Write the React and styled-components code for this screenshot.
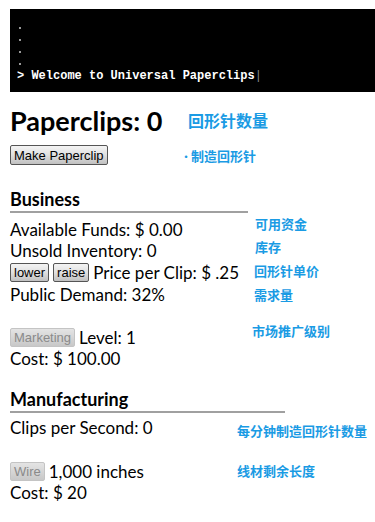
import React from 'react';
import styled, { createGlobalStyle } from 'styled-components';

const GlobalStyle = createGlobalStyle`
  body {
    margin: 0;
    background: #fff;
    font-family: Lato, "Noto Sans", sans-serif;
    color: #000;
  }
`;

const Page = styled.div`
  width: 375px;
  height: 522px;
  padding: 9px 0 0 10px;
  box-sizing: border-box;
  overflow: hidden;
`;

const Terminal = styled.div`
  background: #000;
  height: 83px;
  padding: 15px 0 0 7px;
  box-sizing: border-box;
  font-family: "Liberation Mono", "DejaVu Sans Mono", monospace;
  font-size: 12px;
  color: #fff;
`;

const Dot = styled.div`
  width: 2px;
  height: 2px;
  background: #999;
  margin: 3px 0 10px 2px;
`;

const Prompt = styled.div`
  font-weight: bold;
  line-height: 14px;
  margin-top: -6px;
`;

const Cursor = styled.span`
  color: #888;
  font-weight: normal;
`;

const Line = styled.div`
  display: grid;
  grid-template-columns: ${p => p.$at - 10}px auto;
  align-items: center;
  margin-top: ${p => p.$mt || 0}px;
  height: ${p => p.$h || 21}px;
`;

const Left = styled.div`
  display: flex;
  align-items: center;
  gap: 4px;
  font-size: 17px;
  white-space: nowrap;
`;

const Title = styled.h1`
  margin: 0;
  font-size: 27px;
  font-weight: bold;
  white-space: nowrap;
`;

const Note = styled.span`
  color: #1a9be4;
  font-family: "Noto Sans CJK SC", sans-serif;
  font-weight: bold;
  font-size: ${p => p.$size || 13}px;
  white-space: nowrap;
  position: relative;
  top: ${p => p.$dy || 0}px;
`;

const Bullet = styled.span`
  font-size: 10px;
`;

const Heading = styled.div`
  width: ${p => p.$w}px;
  font-size: 18px;
  line-height: 20px;
  font-weight: bold;
  border-bottom: 2px solid #a0a0a0;
  padding-bottom: 2px;
  margin: ${p => p.$mt}px 0 ${p => p.$mb}px;
`;

const Button = styled.button`
  font-family: "Liberation Sans", Arial, sans-serif;
  font-size: 13px;
  height: ${p => p.$h || 19}px;
  padding: 0 3px;
  border-radius: 2px;
  border: 1px solid ${p => (p.disabled ? '#c4c4c4' : '#555')};
  color: ${p => (p.disabled ? '#8a8a8a' : '#000')};
  background: ${p =>
    p.disabled
      ? 'linear-gradient(#e4e4e4, #c8c8c8)'
      : 'linear-gradient(#f4f4f4, #e0e0e0 50%, #c0c0c0)'};
  margin: 0;
  line-height: 1;
`;

export default function App() {
  return (
    <Page>
      <GlobalStyle />
      <Terminal>
        <Dot />
        <Dot />
        <Dot />
        <Dot />
        <Prompt>
          &gt; Welcome to Universal Paperclips<Cursor>|</Cursor>
        </Prompt>
      </Terminal>

      <Line $at={188} $mt={8} $h={40}>
        <Title>Paperclips: 0</Title>
        <Note $size={16}>回形针数量</Note>
      </Line>

      <Line $at={181} $mt={4} $h={22}>
        <Left>
          <Button $h={20}>Make Paperclip</Button>
        </Left>
        <Note>
          <Bullet>·</Bullet>制造回形针
        </Note>
      </Line>

      <Heading $w={238} $mt={23} $mb={6}>Business</Heading>
      <Line $at={255}>
        <Left>Available Funds: $ 0.00</Left>
        <Note $dy={-6}>可用资金</Note>
      </Line>
      <Line $at={255}>
        <Left>Unsold Inventory: 0</Left>
        <Note $dy={-4}>库存</Note>
      </Line>
      <Line $at={254} $h={23}>
        <Left>
          <Button>lower</Button>
          <Button>raise</Button>
          <span>Price per Clip: $ .25</span>
        </Left>
        <Note $dy={-2}>回形针单价</Note>
      </Line>
      <Line $at={254}>
        <Left>Public Demand: 32%</Left>
        <Note $dy={0}>需求量</Note>
      </Line>

      <Line $at={252} $mt={22}>
        <Left>
          <Button disabled>Marketing</Button>
          <span>Level: 1</span>
        </Left>
        <Note $dy={-7}>市场推广级别</Note>
      </Line>
      <Line $at={252}>
        <Left>Cost: $ 100.00</Left>
      </Line>

      <Heading $w={275} $mt={20} $mb={4}>Manufacturing</Heading>
      <Line $at={237}>
        <Left>Clips per Second: 0</Left>
        <Note $dy={3}>每分钟制造回形针数量</Note>
      </Line>

      <Line $at={237} $mt={23}>
        <Left>
          <Button disabled>Wire</Button>
          <span>1,000 inches</span>
        </Left>
        <Note $dy={-1}>线材剩余长度</Note>
      </Line>
      <Line $at={237}>
        <Left>Cost: $ 20</Left>
      </Line>
    </Page>
  );
}
